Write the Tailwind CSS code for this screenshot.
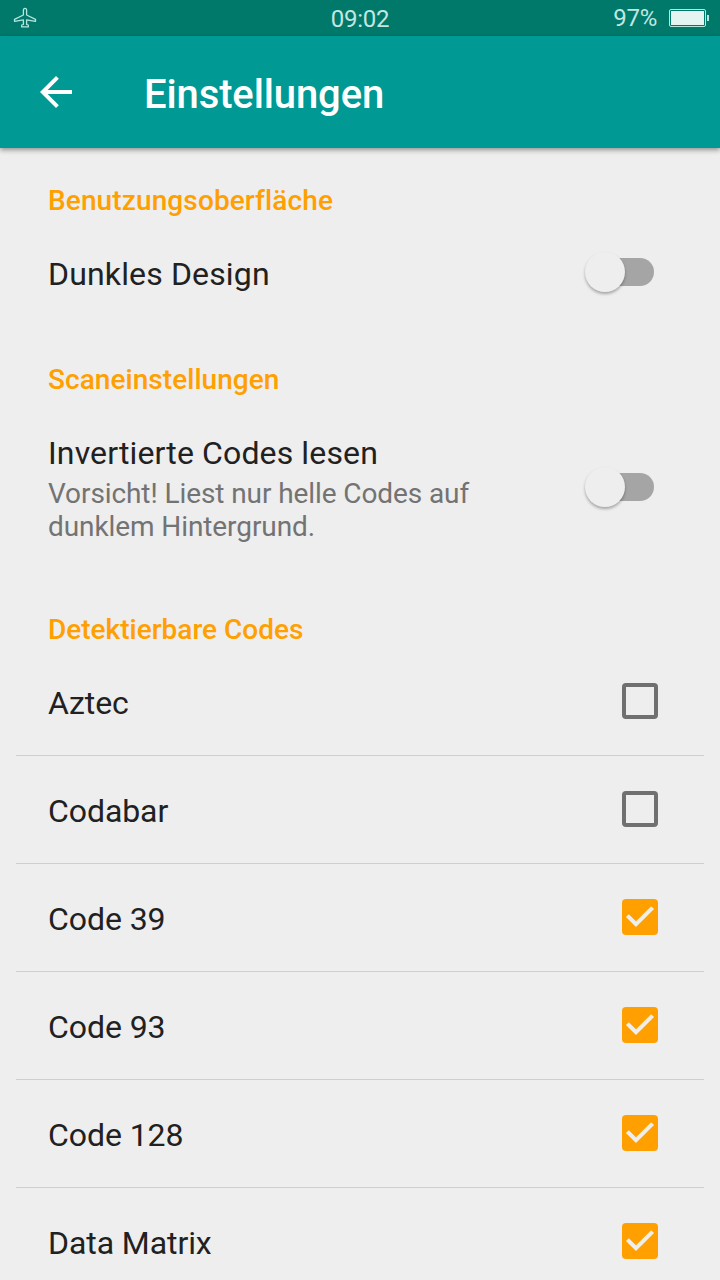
<!DOCTYPE html>
<html lang="de">
<head>
  <meta charset="UTF-8" />
  <meta name="viewport" content="width=device-width, initial-scale=1.0"/>
  <title>Einstellungen</title>
  <script src="https://cdn.jsdelivr.net/npm/@tailwindcss/browser@4"></script>
</head>
<body class="bg-[#eeeeee] text-[#212121] font-[Roboto,sans-serif] [font-variant-ligatures:none]">

  <div class="w-[720px] h-[1280px] overflow-hidden flex flex-col">

    <!-- Status bar -->
    <div class="h-9 shrink-0 bg-[#00796b] text-[#c2e6e1] text-2xl leading-9 tracking-[-0.3px] grid grid-cols-3 items-center">
      <svg class="w-6 h-6 ml-[13px] mt-0.5" viewBox="0 0 24 24" fill="none" stroke="#b5e6df" stroke-width="1.3" stroke-linejoin="round">
        <path d="M12 1.300c-1 0-1.600.8-1.600 2V8L1.500 12.300v2l8.900-1.400v4.600L8.700 18v1.900h6.600V18l-1.700-.5v-4.600l8.900 1.400v-2L13.600 8V3.300c0-1.200-.6-2-1.600-2z"/>
      </svg>
      <span class="text-center pt-0.5 leading-[34px]">09:02</span>
      <div class="flex items-center justify-end pr-[11px]">
        <span class="mr-3">97%</span>
        <div class="w-[37px] h-[18px] border border-[#b5e6df] rounded-xs p-px">
          <div class="h-full bg-[#e3f4f1]"></div>
        </div>
        <div class="w-0.5 h-1.5 ml-px bg-[#b5e6df]"></div>
      </div>
    </div>

    <!-- Toolbar -->
    <header class="h-28 shrink-0 bg-[#009993] text-white flex items-start pl-8 pt-8 shadow-[0_2px_5px_rgba(0,0,0,0.4)]">
      <svg class="w-12 h-12" viewBox="0 0 24 24" fill="currentColor">
        <path d="M20 11H7.830l5.590-5.590L12 4l-8 8 8 8 1.410-1.410L7.830 13H20v-2z"/>
      </svg>
      <h1 class="ml-16 mt-[3px] text-[40px] leading-[47px] font-medium tracking-[-0.12px]">Einstellungen</h1>
    </header>

    <main class="flex flex-col">
      <h2 class="h-[71px] px-12 pt-9 text-[28px] leading-[33px] font-medium tracking-[0.12px] text-[#ffa000]">Benutzungsoberfläche</h2>
      <div class="h-[108px] pl-12 pr-[66px] flex items-start justify-between">
        <span class="mt-9 text-[32px] leading-[38px] tracking-[0.15px]">Dunkles Design</span>
        <div class="mt-[33px] w-[69px] h-10 flex items-center">
          <div class="w-10 h-10 z-10 rounded-full bg-[#eeeeee] shadow-[0_2px_3px_rgba(0,0,0,0.3)]"></div>
          <div class="w-[49px] h-7 -ml-5 rounded-r-full bg-[#a5a5a5]"></div>
        </div>
      </div>

      <h2 class="h-[71px] px-12 pt-9 text-[28px] leading-[33px] font-medium tracking-[0.05px] text-[#ffa000]">Scaneinstellungen</h2>
      <div class="h-[179px] pl-12 pr-[66px] flex items-start justify-between">
        <div class="mt-9">
          <p class="text-[32px] leading-[38px] tracking-[0.13px]">Invertierte Codes lesen</p>
          <p class="mt-[5px] text-[28px] leading-[33px] tracking-[-0.09px] text-[#737373]">Vorsicht! Liest nur helle Codes auf<br>dunklem Hintergrund.</p>
        </div>
        <div class="mt-[69px] w-[69px] h-10 flex items-center">
          <div class="w-10 h-10 z-10 rounded-full bg-[#eeeeee] shadow-[0_2px_3px_rgba(0,0,0,0.3)]"></div>
          <div class="w-[49px] h-7 -ml-5 rounded-r-full bg-[#a5a5a5]"></div>
        </div>
      </div>

      <h2 class="h-[71px] px-12 pt-9 text-[28px] leading-[33px] font-medium text-[#ffa000]">Detektierbare Codes</h2>
      <ul id="codeList" class="px-4"></ul>
    </main>
  </div>

  <script>
    const codes = [
      { name: "Aztec", checked: false },
      { name: "Codabar", checked: false },
      { name: "Code 39", checked: true },
      { name: "Code 93", checked: true },
      { name: "Code 128", checked: true },
      { name: "Data Matrix", checked: true }
    ];

    const boxOff = `<div class="mt-[35px] w-9 h-9 rounded-sm border-4 border-[#707070]"></div>`;
    const boxOn = `
      <div class="mt-[35px] w-9 h-9 rounded-sm bg-[#ffa000]">
        <svg class="w-9 h-9" viewBox="0 0 36 36" fill="none" stroke="#eeeeee" stroke-width="4">
          <path d="M5.400 16.600L14 25.200L30.600 8.600"/>
        </svg>
      </div>`;

    document.getElementById("codeList").innerHTML = codes.map(code => `
      <li class="h-[108px] pl-8 pr-[46px] flex items-start justify-between border-b border-[#cfcfcf]">
        <span class="mt-9 text-[32px] leading-[38px] tracking-[-0.08px]">${code.name}</span>
        ${code.checked ? boxOn : boxOff}
      </li>
    `).join("");
  </script>

</body>
</html>
